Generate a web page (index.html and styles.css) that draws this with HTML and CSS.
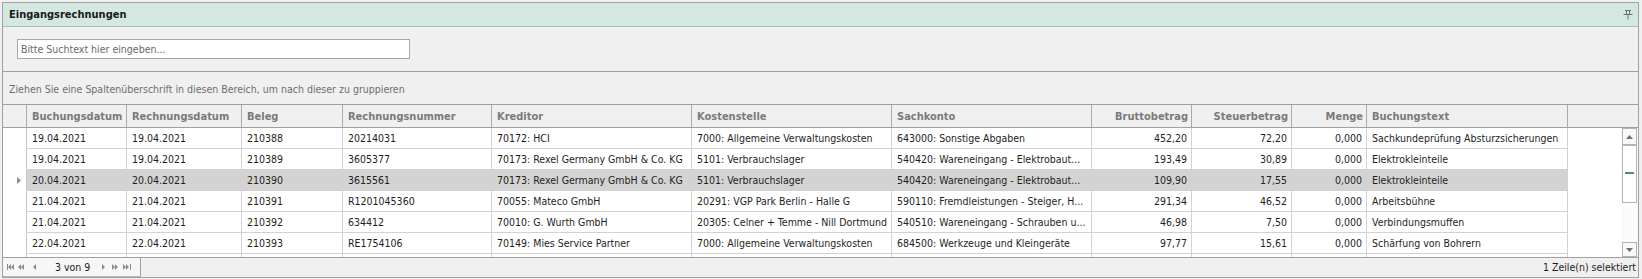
FILE: index.html
```html
<!DOCTYPE html>
<html lang="de">

<head>
    <meta charset="UTF-8">
    <meta name="viewport" content="width=device-width, initial-scale=1.0">
    <title>Eingangsrechnungen</title>
    <link rel="stylesheet" href="styles.css">
</head>

<body>

    <div class="panel">

        <div class="panel-title">
            <span>Eingangsrechnungen</span>
            <svg class="pin" width="10" height="10" viewBox="0 0 10 10">
                <path d="M2 0.5h6 M3.5 0.5v4 M6.5 0.5v4 M0.5 4.5h9 M5 4.5v5" stroke="#6e6e6e" stroke-width="1" fill="none" />
            </svg>
        </div>

        <div class="search-bar">
            <input class="search-input" type="text" placeholder="Bitte Suchtext hier eingeben...">
        </div>

        <div class="group-panel">Ziehen Sie eine Spaltenüberschrift in diesen Bereich, um nach dieser zu gruppieren</div>

        <div class="grid">
            <table class="grid-head">
                <colgroup>
                    <col class="c-ind">
                    <col class="c-date">
                    <col class="c-rdate">
                    <col class="c-beleg">
                    <col class="c-nr">
                    <col class="c-wide">
                    <col class="c-wide">
                    <col class="c-wide">
                    <col class="c-amount">
                    <col class="c-amount">
                    <col class="c-menge">
                    <col class="c-text">
                    <col class="c-fill">
                </colgroup>
                <tr>
                    <th></th>
                    <th>Buchungsdatum</th>
                    <th>Rechnungsdatum</th>
                    <th>Beleg</th>
                    <th>Rechnungsnummer</th>
                    <th>Kreditor</th>
                    <th>Kostenstelle</th>
                    <th>Sachkonto</th>
                    <th class="num">Bruttobetrag</th>
                    <th class="num">Steuerbetrag</th>
                    <th class="num">Menge</th>
                    <th>Buchungstext</th>
                    <th class="last"></th>
                </tr>
            </table>

            <div class="grid-body">
                <table class="grid-rows">
                    <colgroup>
                        <col class="c-ind">
                        <col class="c-date">
                        <col class="c-rdate">
                        <col class="c-beleg">
                        <col class="c-nr">
                        <col class="c-wide">
                        <col class="c-wide">
                        <col class="c-wide">
                        <col class="c-amount">
                        <col class="c-amount">
                        <col class="c-menge">
                        <col class="c-text">
                    </colgroup>
                    <tr>
                        <td class="ind"></td>
                        <td>19.04.2021</td>
                        <td>19.04.2021</td>
                        <td>210388</td>
                        <td>20214031</td>
                        <td>70172: HCI</td>
                        <td>7000: Allgemeine Verwaltungskosten</td>
                        <td>643000: Sonstige Abgaben</td>
                        <td class="num">452,20</td>
                        <td class="num">72,20</td>
                        <td class="num">0,000</td>
                        <td>Sachkundeprüfung Absturzsicherungen</td>
                    </tr>
                    <tr>
                        <td class="ind"></td>
                        <td>19.04.2021</td>
                        <td>19.04.2021</td>
                        <td>210389</td>
                        <td>3605377</td>
                        <td>70173: Rexel Germany GmbH &amp; Co. KG</td>
                        <td>5101: Verbrauchslager</td>
                        <td>540420: Wareneingang - Elektrobaut...</td>
                        <td class="num">193,49</td>
                        <td class="num">30,89</td>
                        <td class="num">0,000</td>
                        <td>Elektrokleinteile</td>
                    </tr>
                    <tr class="selected">
                        <td class="ind">
                            <svg width="4" height="7" viewBox="0 0 4 7"><path d="M0 0L4 3.5L0 7z" fill="#8c8c8c" /></svg>
                        </td>
                        <td>20.04.2021</td>
                        <td>20.04.2021</td>
                        <td>210390</td>
                        <td>3615561</td>
                        <td>70173: Rexel Germany GmbH &amp; Co. KG</td>
                        <td>5101: Verbrauchslager</td>
                        <td>540420: Wareneingang - Elektrobaut...</td>
                        <td class="num">109,90</td>
                        <td class="num">17,55</td>
                        <td class="num">0,000</td>
                        <td>Elektrokleinteile</td>
                    </tr>
                    <tr>
                        <td class="ind"></td>
                        <td>21.04.2021</td>
                        <td>21.04.2021</td>
                        <td>210391</td>
                        <td>R1201045360</td>
                        <td>70055: Mateco GmbH</td>
                        <td>20291: VGP Park Berlin - Halle G</td>
                        <td>590110: Fremdleistungen - Steiger, H...</td>
                        <td class="num">291,34</td>
                        <td class="num">46,52</td>
                        <td class="num">0,000</td>
                        <td>Arbeitsbühne</td>
                    </tr>
                    <tr>
                        <td class="ind"></td>
                        <td>21.04.2021</td>
                        <td>21.04.2021</td>
                        <td>210392</td>
                        <td>634412</td>
                        <td>70010: G. Wurth GmbH</td>
                        <td>20305: Celner + Temme - Nill Dortmund</td>
                        <td>540510: Wareneingang - Schrauben u...</td>
                        <td class="num">46,98</td>
                        <td class="num">7,50</td>
                        <td class="num">0,000</td>
                        <td>Verbindungsmuffen</td>
                    </tr>
                    <tr>
                        <td class="ind"></td>
                        <td>22.04.2021</td>
                        <td>22.04.2021</td>
                        <td>210393</td>
                        <td>RE1754106</td>
                        <td>70149: Mies Service Partner</td>
                        <td>7000: Allgemeine Verwaltungskosten</td>
                        <td>684500: Werkzeuge und Kleingeräte</td>
                        <td class="num">97,77</td>
                        <td class="num">15,61</td>
                        <td class="num">0,000</td>
                        <td>Schärfung von Bohrern</td>
                    </tr>
                    <tr>
                        <td class="ind"></td>
                        <td></td>
                        <td></td>
                        <td></td>
                        <td></td>
                        <td></td>
                        <td></td>
                        <td></td>
                        <td></td>
                        <td></td>
                        <td></td>
                        <td></td>
                    </tr>
                </table>

                <div class="rows-fill"></div>

                <div class="vscroll">
                    <div class="sb-btn">
                        <svg width="7" height="4" viewBox="0 0 7 4"><path d="M0 4L3.5 0L7 4z" fill="#707070" /></svg>
                    </div>
                    <div class="sb-thumb"><span class="grip"></span></div>
                    <div class="sb-track"></div>
                    <div class="sb-btn down">
                        <svg width="7" height="4" viewBox="0 0 7 4"><path d="M0 0L3.5 4L7 0z" fill="#707070" /></svg>
                    </div>
                </div>
            </div>
        </div>

        <div class="grid-footer">
            <div class="pager">
                <svg class="pg-first" width="7" height="6" viewBox="0 0 7 6"><path d="M0 0h1v6h-1z M4 0v6L1 3z M7 0v6L4 3z" fill="#8a8a8a" /></svg>
                <svg class="pg-prevpage" width="6" height="6" viewBox="0 0 6 6"><path d="M3 0v6L0 3z M6 0v6L3 3z" fill="#8a8a8a" /></svg>
                <svg class="pg-prev" width="3" height="6" viewBox="0 0 3 6"><path d="M3 0v6L0 3z" fill="#8a8a8a" /></svg>
                <span class="pg-pos">3 von 9</span>
                <svg class="pg-next" width="3" height="6" viewBox="0 0 3 6"><path d="M0 0v6L3 3z" fill="#8a8a8a" /></svg>
                <svg class="pg-nextpage" width="6" height="6" viewBox="0 0 6 6"><path d="M0 0v6L3 3z M3 0v6L6 3z" fill="#8a8a8a" /></svg>
                <svg class="pg-last" width="8" height="6" viewBox="0 0 8 6"><path d="M0 0v6L3 3z M3 0v6L6 3z M7 0h1v6h-1z" fill="#8a8a8a" /></svg>
            </div>
            <div class="status">1 Zeile(n) selektiert</div>
        </div>

    </div>

</body>

</html>
```

FILE: styles.css
```css
body {
    margin: 0;
    background-color: #f0f0f0;
    font-family: "DejaVu Sans Condensed", "DejaVu Sans", sans-serif;
    font-size: 10.5px;
    color: #1e1e1e;
}

.panel {
    margin: 2px 3px 0 2px;
    border: 1px solid #a0a0a0;
    height: 274px;
    display: flex;
    flex-direction: column;
}

.panel-title {
    height: 23px;
    line-height: 23px;
    padding: 0 5px 0 6px;
    background-color: #d3e8e1;
    border-bottom: 1px solid #a9bdb7;
    font-weight: bold;
    font-size: 11px;
    color: #1a1a1a;
    display: flex;
    justify-content: space-between;
    align-items: center;
}

.pin {
    margin-top: 1px;
}

.search-bar {
    height: 20px;
    padding: 12px 14px;
}

.search-input {
    display: block;
    box-sizing: border-box;
    width: 393px;
    height: 20px;
    margin: 0;
    border: 1px solid #a7a7a7;
    padding: 0 3px;
    font-family: inherit;
    font-size: 10.5px;
    background-color: white;
}

.search-input::placeholder {
    color: #6a6a6a;
}

input:focus {
    outline: none;
}

.group-panel {
    border-top: 1px solid #a0a0a0;
    height: 21px;
    padding: 11px 0 0 6px;
    line-height: 13px;
    color: #6e6e6e;
}

.grid {
    border-top: 1px solid #a0a0a0;
}

table {
    table-layout: fixed;
    border-collapse: separate;
    border-spacing: 0;
}

.c-ind { width: 24px; }
.c-date { width: 100px; }
.c-rdate { width: 115px; }
.c-beleg { width: 101px; }
.c-nr { width: 149px; }
.c-wide { width: 200px; }
.c-amount { width: 100px; }
.c-menge { width: 75px; }
.c-text { width: 201px; }
.c-fill { width: 70px; }

.grid-head {
    width: 1635px;
}

.grid-head th {
    height: 22px;
    padding: 0 3px 0 5px;
    border-right: 1px solid #a9a9a9;
    border-bottom: 1px solid #a0a0a0;
    background-color: #f0f0f0;
    color: #7a7a7a;
    font-size: 11px;
    font-weight: bold;
    text-align: left;
    white-space: nowrap;
    overflow: hidden;
}

.grid-head th.num {
    text-align: right;
}

.grid-head th.last {
    border-right: none;
}

.grid-body {
    height: 129px;
    overflow: hidden;
    display: flex;
}

.grid-rows {
    width: 1565px;
    flex: none;
    background-color: white;
}

.grid-rows td {
    height: 20px;
    line-height: 20px;
    padding: 0 4px 0 5px;
    border-right: 1px solid #d2d2d2;
    border-bottom: 1px solid #d2d2d2;
    white-space: nowrap;
    overflow: hidden;
}

.grid-rows td.num {
    text-align: right;
}

.grid-rows td.ind {
    border-bottom-color: white;
    border-right-color: #c4c4c4;
    padding: 0 0 0 14px;
}

.grid-rows td.ind svg {
    display: block;
}

.grid-rows tr.selected td {
    background-color: #d3d3d3;
}

.grid-rows tr.selected td.ind {
    background-color: white;
}

.rows-fill {
    flex: 1;
    background-color: white;
}

.vscroll {
    width: 15px;
    padding: 0 1px;
    background-color: #fbfbfb;
    display: flex;
    flex-direction: column;
}

.sb-btn {
    height: 15px;
    border: 1px solid #b4b4b4;
    background-color: #f8f8f8;
    display: flex;
    align-items: center;
    justify-content: center;
}

.sb-btn.down {
    height: 13px;
}

.sb-thumb {
    height: 56px;
    border: 1px solid #b4b4b4;
    background-color: white;
    display: flex;
    align-items: center;
    justify-content: center;
}

.grip {
    width: 9px;
    height: 2px;
    margin-top: -3px;
    background-color: #4f8f5d;
}

.sb-track {
    flex: 1;
}

.grid-footer {
    flex: 1;
    border-top: 1px solid #a0a0a0;
    display: flex;
    justify-content: space-between;
}

.pager {
    width: 137px;
    border-right: 1px solid #a0a0a0;
    border-bottom: 1px solid #b8b8b8;
    background-color: #f7f7f7;
    display: flex;
    align-items: center;
}

.pg-first { margin-left: 4px; }
.pg-prevpage { margin-left: 4px; }
.pg-prev { margin-left: 9px; }
.pg-pos {
    margin-left: 19px;
    font-size: 10.5px;
    color: #1a1a1a;
}
.pg-next { margin-left: 12px; }
.pg-nextpage { margin-left: 7px; }
.pg-last { margin-left: 5px; }

.status {
    line-height: 19px;
    padding-right: 2px;
    color: #1e1e1e;
}
```
